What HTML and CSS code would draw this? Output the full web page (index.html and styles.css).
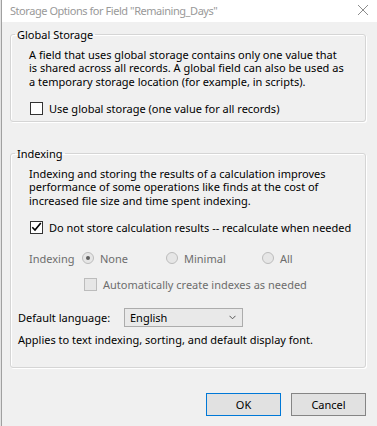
FILE: index.html
```html
<!DOCTYPE html>
<html>
<head>
<meta charset="utf-8">
<link rel="stylesheet" href="styles.css">
</head>
<body>
<div class="window">
  <div class="titlebar">
    <span class="title">Storage Options for Field "Remaining_Days"</span>
    <svg class="close" width="12" height="12" viewBox="0 0 12 12"><path d="M1 1 L11 11 M11 1 L1 11" stroke="#8c8c8c" stroke-width="1" fill="none"/></svg>
  </div>
  <div class="content">
    <fieldset class="group group-global">
      <legend>Global Storage</legend>
      <div class="inner">
        <p class="desc">A field that uses global storage contains only one value that<br>is shared across all records. A global field can also be used as<br>a temporary storage location (for example, in scripts).</p>
        <div class="check check-first"><span class="box"></span><span>Use global storage (one value for all records)</span></div>
      </div>
    </fieldset>
    <fieldset class="group group-index">
      <legend>Indexing</legend>
      <div class="inner">
        <p class="desc">Indexing and storing the results of a calculation improves<br>performance of some operations like finds at the cost of<br>increased file size and time spent indexing.</p>
        <div class="check check-first"><span class="box"><svg width="13" height="13" viewBox="0 0 13 13"><path d="M2.3 6.2 L5 9 L10.8 2" stroke="#000" stroke-width="1.6" fill="none"/></svg></span><span>Do not store calculation results -- recalculate when needed</span></div>
        <div class="radios disabled">
          <span class="radio-label">Indexing</span>
          <span class="radio radio-none"><span class="dot on"></span>None</span>
          <span class="radio radio-minimal"><span class="dot"></span>Minimal</span>
          <span class="radio"><span class="dot"></span>All</span>
        </div>
        <div class="check auto disabled"><span class="box box-disabled"></span><span>Automatically create indexes as needed</span></div>
        <div class="lang">
          <span class="lang-label">Default language:</span>
          <div class="select"><span>English</span><svg width="7" height="5" viewBox="0 0 7 5"><path d="M0.5 0.8 L3.5 3.8 L6.5 0.8" stroke="#555" stroke-width="1" fill="none"/></svg></div>
        </div>
        <p class="applies">Applies to text indexing, sorting, and default display font.</p>
      </div>
    </fieldset>
    <div class="buttons">
      <button class="btn btn-default">OK</button>
      <button class="btn">Cancel</button>
    </div>
  </div>
</div>
</body>
</html>
```
FILE: styles.css
```css
html, body {
  margin: 0;
  padding: 0;
}
body {
  background: #f0f0f0;
  font-family: "Noto Sans", "Open Sans", sans-serif;
  font-size: 11px;
  color: #000;
  border-left: 1px solid #e2e2e2;
  height: 426px;
  overflow: hidden;
}
.window {
  border-left: 1px solid #a0a0a0;
  height: 426px;
}
.titlebar {
  height: 22px;
  background: #fff;
  display: flex;
  align-items: center;
  justify-content: space-between;
  padding: 0 8px 0 8px;
}
.title {
  color: #999;
  font-size: 11px;
  letter-spacing: -0.45px;
  line-height: 16px;
  white-space: nowrap;
}
.close {
  margin-right: 0;
  margin-top: -2px;
}
.content {
  padding: 0 11px 0 8px;
}
.group {
  margin: 0;
  padding: 0;
  border: 1px solid #d5d5d5;
  border-radius: 3px;
  box-shadow: inset 1px 1px 0 #fff, 1px 1px 0 #fff;
  min-width: 0;
}
.group legend {
  margin-left: 4px;
  padding: 0 2px;
  line-height: 13px;
  white-space: nowrap;
}
.group-global {
  margin-top: 6px;
}
.group-index {
  margin-top: 25px;
}
.inner {
  padding: 7px 8px 6px 7px;
}
.group-index .inner {
  padding-bottom: 21px;
}
.desc {
  margin: 0 0 0 11px;
  line-height: 13.33px;
  white-space: nowrap;
}
.check {
  display: flex;
  align-items: center;
  gap: 6px;
  line-height: 13px;
  white-space: nowrap;
}
.check-first {
  margin: 14px 0 0 12px;
}
.box {
  width: 11px;
  height: 11px;
  border: 1px solid #333;
  background: #fff;
  display: block;
  flex: none;
  position: relative;
}
.box svg {
  position: absolute;
  left: -1px;
  top: -1px;
}
.box-disabled {
  border-color: #bcbcbc;
  background: #e6e6e6;
}
.disabled {
  color: #6d6d6d;
}
.radios {
  display: flex;
  align-items: center;
  margin: 17px 0 0 11px;
  line-height: 15px;
  white-space: nowrap;
}
.radio-label {
  width: 53px;
}
.radio {
  display: flex;
  align-items: center;
  gap: 6px;
}
.radio-none {
  width: 84px;
}
.radio-minimal {
  width: 96px;
}
.dot {
  width: 10px;
  height: 10px;
  border: 1px solid #bcbcbc;
  border-radius: 50%;
  background: #e6e6e6;
  display: flex;
  align-items: center;
  justify-content: center;
}
.dot.on::after {
  content: "";
  width: 4px;
  height: 4px;
  border-radius: 50%;
  background: #5f5f5f;
}
.auto {
  margin: 12px 0 0 66px;
}
.lang {
  display: flex;
  align-items: center;
  margin-top: 17px;
}
.lang-label {
  width: 106px;
}
.select {
  width: 106px;
  height: 17px;
  border: 1px solid #acacac;
  background: #e9e9e9;
  display: flex;
  align-items: center;
  justify-content: space-between;
  padding: 0 6px 0 5px;
}
.applies {
  margin: 6px 0 0 0;
  line-height: 13.33px;
  white-space: nowrap;
}
.buttons {
  display: flex;
  justify-content: flex-end;
  gap: 10px;
  margin-top: 25px;
}
.btn {
  width: 75px;
  height: 23px;
  background: #e1e1e1;
  border: 1px solid #858585;
  font-family: "Noto Sans", "Open Sans", sans-serif;
  font-size: 11px;
  color: #000;
  padding: 0;
  margin: 0;
}
.btn-default {
  border-color: #0078d7;
}
```
